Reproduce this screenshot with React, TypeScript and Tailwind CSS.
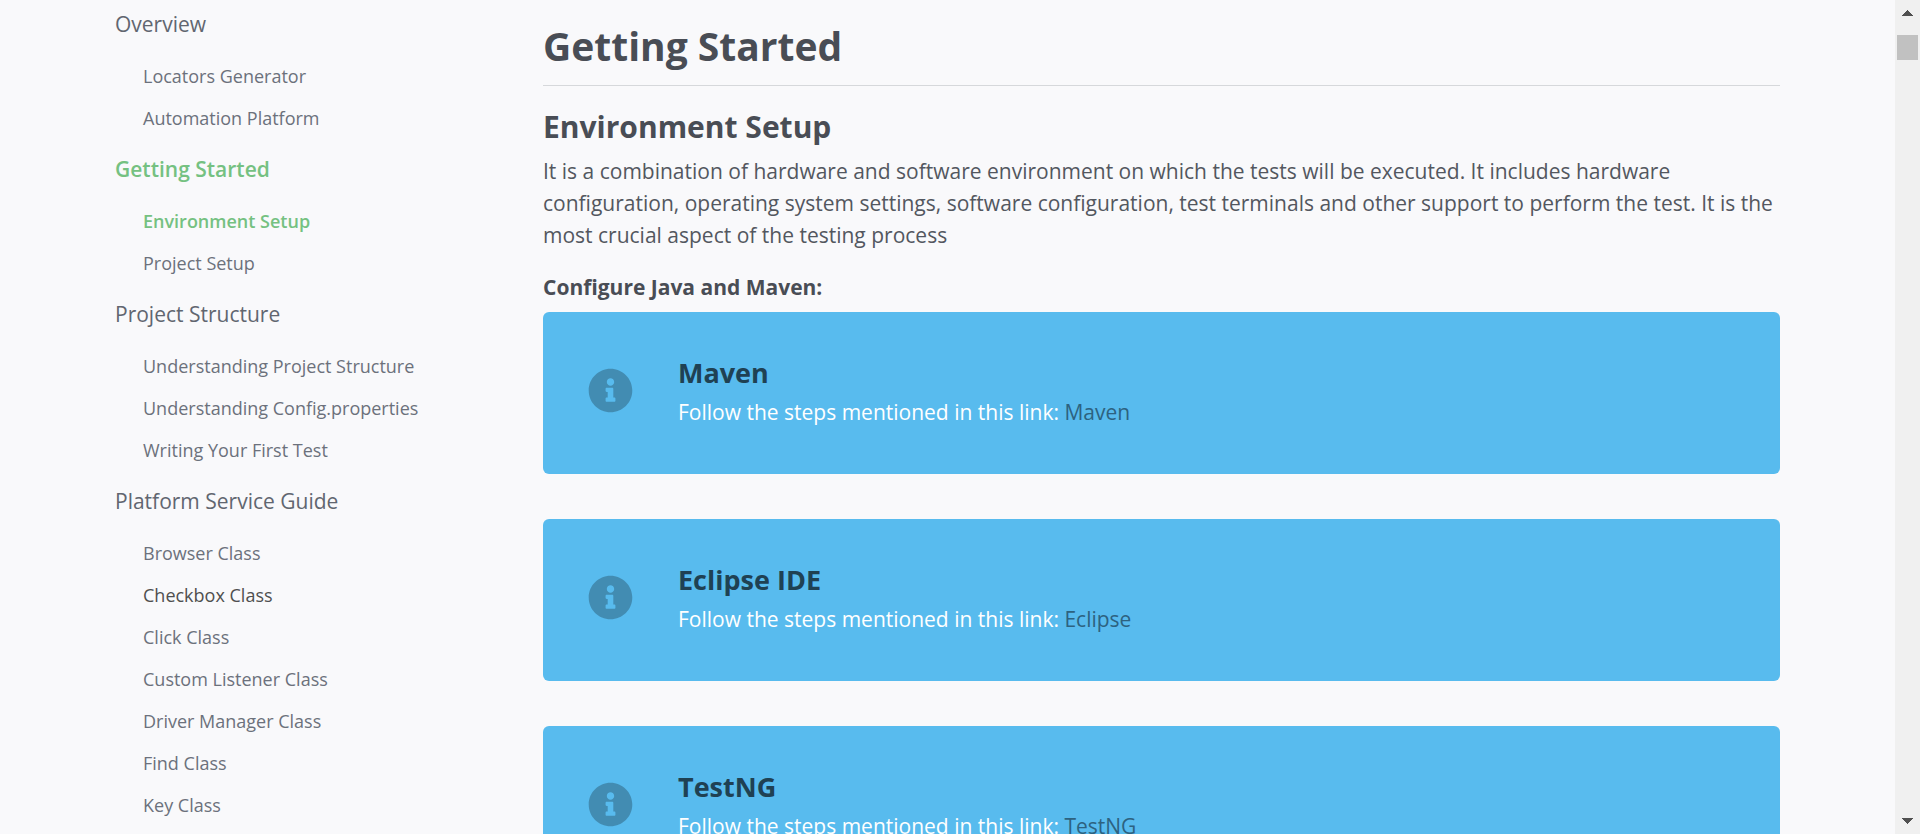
import { FaInfoCircle } from "react-icons/fa";

type Item = { label: string; state?: "active" | "hover" };
type Section = { title: string; active?: boolean; items: Item[] };

const sections: Section[] = [
  { title: "Overview", items: [{ label: "Locators Generator" }, { label: "Automation Platform" }] },
  {
    title: "Getting Started",
    active: true,
    items: [{ label: "Environment Setup", state: "active" }, { label: "Project Setup" }],
  },
  {
    title: "Project Structure",
    items: [
      { label: "Understanding Project Structure" },
      { label: "Understanding Config.properties" },
      { label: "Writing Your First Test" },
    ],
  },
  {
    title: "Platform Service Guide",
    items: [
      { label: "Browser Class" },
      { label: "Checkbox Class", state: "hover" },
      { label: "Click Class" },
      { label: "Custom Listener Class" },
      { label: "Driver Manager Class" },
      { label: "Find Class" },
      { label: "Key Class" },
    ],
  },
];

const callouts = [
  { title: "Maven", link: "Maven" },
  { title: "Eclipse IDE", link: "Eclipse" },
  { title: "TestNG", link: "TestNG" },
];

function itemColor(state?: Item["state"]) {
  if (state === "active") return "font-semibold text-[#75c181]";
  if (state === "hover") return "text-[#4f4f4f]";
  return "text-[#6c717c] hover:text-[#4f4f4f]";
}

function Sidebar() {
  return (
    <nav aria-label="Documentation" className="w-[405px] shrink-0 pt-1">
      {sections.map((section) => (
        <div key={section.title} className="mb-2.5">
          <a
            href="#"
            className={`mb-[9px] flex h-[42px] items-center text-[21px] ${
              section.active ? "font-semibold text-[#75c181]" : "text-[#616670]"
            }`}
          >
            {section.title}
          </a>
          <ul className="pl-7">
            {section.items.map((item) => (
              <li key={item.label}>
                <a href="#" className={`flex h-[42px] items-center text-lg ${itemColor(item.state)}`}>
                  {item.label}
                </a>
              </li>
            ))}
          </ul>
        </div>
      ))}
    </nav>
  );
}

function Callout({ title, link }: { title: string; link: string }) {
  return (
    <section className="mb-[45px] flex h-[162px] gap-[45px] rounded-md bg-[#58bbee] px-[45px] pt-[41px]">
      <FaInfoCircle aria-hidden="true" className="mt-[15px] size-[45px] shrink-0 text-black/25" />
      <div>
        <h3 className="text-[27px] leading-10 font-bold text-[#1f4153]">{title}</h3>
        <p className="text-[21px] leading-[38px] text-white">
          Follow the steps mentioned in this link:{" "}
          <a href="#" className="text-[#2d6280]">
            {link}
          </a>
        </p>
      </div>
    </section>
  );
}

function ScrollTrack() {
  return (
    <div aria-hidden="true" className="flex w-[25px] shrink-0 flex-col items-center bg-[#f0f0f0]">
      <svg viewBox="0 0 11 6" className="mt-2.5 h-1.5 w-[11px] fill-[#505050]" shapeRendering="crispEdges">
        <path d="M5.500 0 11 6H0z" />
      </svg>
      <div className="mt-[19px] h-[25px] w-[21px] bg-[#c1c1c1]" />
      <svg viewBox="0 0 11 6" className="mt-auto mb-2.5 h-1.5 w-[11px] fill-[#505050]" shapeRendering="crispEdges">
        <path d="M0 0h11L5.500 6z" />
      </svg>
    </div>
  );
}

export default function App() {
  return (
    <div className="flex h-screen overflow-hidden bg-[#f9f9fb] font-['Open_Sans',sans-serif] text-[#494d55]">
      <div className="flex min-w-0 flex-1 gap-[23px] pr-[115px] pl-[115px]">
        <Sidebar />
        <main className="min-w-0 flex-1 pt-[17px]">
          <h1 className="border-b border-[#d6d8db] pb-[11px] text-[39px] leading-[57px] font-bold">
            Getting Started
          </h1>
          <h2 className="mt-[21px] text-[30px] leading-10 font-bold">Environment Setup</h2>
          <p className="mt-2 text-[21px] leading-[32px] text-[#53575f]">
            It is a combination of hardware and software environment on which the tests will be executed. It
            includes hardware configuration, operating system settings, software configuration, test terminals and
            other support to perform the test. It is the most crucial aspect of the testing process
          </p>
          <h3 className="mt-5 mb-[9px] text-[21px] leading-[32px] font-bold">Configure Java and Maven:</h3>
          {callouts.map((callout) => (
            <Callout key={callout.title} {...callout} />
          ))}
        </main>
      </div>
      <ScrollTrack />
    </div>
  );
}
